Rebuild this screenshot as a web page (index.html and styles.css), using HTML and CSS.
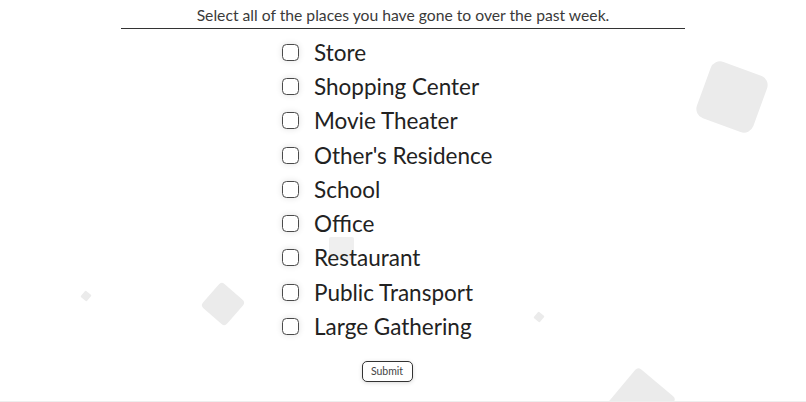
FILE: index.html
```html
<!DOCTYPE html>
<html>
<head>
<meta charset="utf-8">
<link rel="stylesheet" href="styles.css">
</head>
<body>
<div class="page">
  <div class="shapes">
    <div class="shape s1"></div>
    <div class="shape s2"></div>
    <div class="shape s3"></div>
    <div class="shape s4"></div>
    <div class="shape s5"></div>
    <div class="shape s6"></div>
  </div>
  <div class="content">
    <div class="title">Select all of the places you have gone to over the past week.</div>
    <form class="list">
      <label class="row"><span class="box"></span><span class="text">Store</span></label>
      <label class="row"><span class="box"></span><span class="text">Shopping Center</span></label>
      <label class="row"><span class="box"></span><span class="text">Movie Theater</span></label>
      <label class="row"><span class="box"></span><span class="text">Other's Residence</span></label>
      <label class="row"><span class="box"></span><span class="text">School</span></label>
      <label class="row"><span class="box"></span><span class="text">Office</span></label>
      <label class="row"><span class="box"></span><span class="text">Restaurant</span></label>
      <label class="row"><span class="box"></span><span class="text">Public Transport</span></label>
      <label class="row"><span class="box"></span><span class="text">Large Gathering</span></label>
      <div class="actions"><button type="button" class="submit">Submit</button></div>
    </form>
  </div>
</div>
</body>
</html>
```
FILE: styles.css
```css
html, body {
  margin: 0;
  padding: 0;
  background: #fff;
}
body {
  font-family: Lato, "Open Sans", sans-serif;
  font-weight: 400;
  color: #222;
  overflow: hidden;
}
.page {
  position: relative;
  width: 806px;
  height: 402px;
  overflow: hidden;
  border-bottom: 1px solid #eee;
  box-sizing: border-box;
}
.shapes {
  position: absolute;
  inset: 0;
  z-index: 0;
}
.shape {
  position: absolute;
  background: #ebebeb;
}
.s1 { left: 702px; top: 67px; width: 60px; height: 60px; border-radius: 10px; transform: rotate(20deg); }
.s2 { left: 82px; top: 292px; width: 8px; height: 8px; border-radius: 1px; transform: rotate(40deg); }
.s3 { left: 207px; top: 288px; width: 32px; height: 32px; border-radius: 4px; transform: rotate(41deg); }
.s4 { left: 535px; top: 313px; width: 8px; height: 8px; border-radius: 1px; transform: rotate(40deg); }
.s5 { left: 329px; top: 237px; width: 25px; height: 23px; border-radius: 2px; background: #efefef; }
.s6 { left: 616px; top: 377px; width: 50px; height: 50px; border-radius: 4px; transform: rotate(40deg); }

.content {
  position: relative;
  z-index: 1;
}
.title {
  width: 564px;
  margin: 0 auto;
  text-align: center;
  font-size: 15.7px;
  color: #3a3a3a;
  padding-top: 6px;
  height: 22px;
  border-bottom: 1px solid #333;
}
.list {
  width: 210px;
  margin: 6px 0 0 282px;
  display: flex;
  flex-direction: column;
}
.row {
  display: flex;
  align-items: center;
  height: 34.3px;
  gap: 15px;
}
.box {
  width: 15px;
  height: 15px;
  border: 1.5px solid #4a4a4a;
  border-radius: 4.5px;
  background: #fff;
  box-shadow: 0 0 6px rgba(0,0,0,0.12);
  flex: none;
}
.text {
  font-size: 22.5px;
  white-space: nowrap;
  color: #222;
}
.actions {
  display: flex;
  justify-content: center;
  margin-top: 17px;
}
.submit {
  width: 51px;
  height: 21px;
  padding: 0;
  font-family: Lato, sans-serif;
  font-weight: 400;
  font-size: 10.5px;
  color: #444;
  background: #fff;
  border: 1px solid #333;
  border-radius: 5px;
  box-shadow: 0 1px 4px rgba(0,0,0,0.15);
}
```
